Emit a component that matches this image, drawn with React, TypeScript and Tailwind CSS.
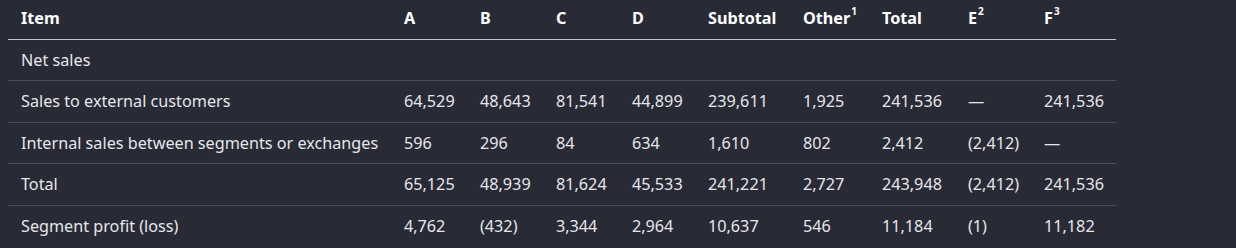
const header = ["Item", "A", "B", "C", "D", "Subtotal", "Other", "Total", "E", "F"];
const notes: Record<string, string> = { Other: "1", E: "2", F: "3" };
const widths = ["w-[383px]", "w-[76px]", "w-[76px]", "w-[76px]", "w-[76px]", "w-[95px]", "w-[79px]", "w-[86px]", "w-[76px]", "w-[85px]"];

const rows: string[][] = [
  ["Net sales", "", "", "", "", "", "", "", "", ""],
  ["Sales to external customers", "64,529", "48,643", "81,541", "44,899", "239,611", "1,925", "241,536", "—", "241,536"],
  ["Internal sales between segments or exchanges", "596", "296", "84", "634", "1,610", "802", "2,412", "(2,412)", "—"],
  ["Total", "65,125", "48,939", "81,624", "45,533", "241,221", "2,727", "243,948", "(2,412)", "241,536"],
  ["Segment profit (loss)", "4,762", "(432)", "3,344", "2,964", "10,637", "546", "11,184", "(1)", "11,182"],
];

export default function App() {
  return (
    <div className="h-[248px] w-[1236px] overflow-hidden bg-[#282a36] pl-2 font-['Noto_Sans',sans-serif] text-[16.2px] text-[#e6e6ea]">
      <table className="w-[1108px] table-fixed border-collapse text-left">
        <colgroup>
          {widths.map((w, i) => (
            <col key={i} className={w} />
          ))}
        </colgroup>
        <thead>
          <tr className="border-b border-[#c4c5cc]">
            {header.map((h) => (
              <th key={h} className="whitespace-nowrap pb-2 pl-[13px] pr-2 pt-1.5 font-bold leading-[24.5px] text-white">
                {h}
                {notes[h] && <sup className="ml-px align-[4px] text-[10px] font-bold leading-none">{notes[h]}</sup>}
              </th>
            ))}
          </tr>
        </thead>
        <tbody>
          {rows.map((r, i) => (
            <tr key={i} className={i < rows.length - 1 ? "border-b border-[#4a4c57]" : ""}>
              {r.map((c, j) => (
                <td key={j} className="whitespace-nowrap py-2 pl-[13px] pr-2 leading-[24.5px]">
                  {c}
                </td>
              ))}
            </tr>
          ))}
        </tbody>
      </table>
    </div>
  );
}
